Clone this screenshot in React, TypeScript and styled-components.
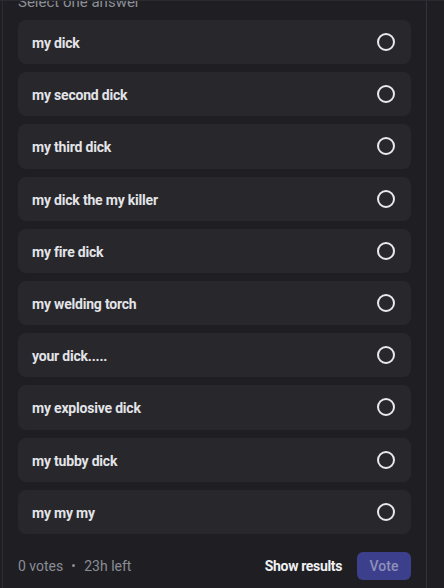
import React from 'react';
import styled, { createGlobalStyle } from 'styled-components';

const GlobalStyle = createGlobalStyle`
  html, body {
    margin: 0;
    padding: 0;
    background: #1f1f23;
  }
  body {
    font-family: Roboto, "Noto Sans", sans-serif;
    -webkit-font-smoothing: antialiased;
  }
`;

const Viewport = styled.div`
  height: 588px;
  overflow: hidden;
  border-top: 1px solid #2a2b30;
  box-sizing: border-box;
  background: #1f1f23;
`;

const Panel = styled.div`
  margin-left: 2px;
  width: 425px;
  box-sizing: border-box;
  border-left: 1px solid #2c2d32;
  border-right: 1px solid #33343a;
  padding: 0 15px 8px;
  margin-top: -8px;
`;

const Hint = styled.div`
  font-size: 15px;
  line-height: 18px;
  color: #8c8f97;
  margin-bottom: 9px;
`;

const OptionList = styled.div`
  display: flex;
  flex-direction: column;
  gap: 8px;
`;

const Option = styled.div`
  height: 44.2px;
  box-sizing: border-box;
  display: flex;
  align-items: center;
  justify-content: space-between;
  padding: 0 16px 0 14px;
  border-radius: 8px;
  background: #27272c;
  cursor: pointer;
`;

const OptionLabel = styled.span`
  padding-top: 2px;
  font-size: 14px;
  font-weight: 700;
  color: #e3e4e8;
  letter-spacing: -0.2px;
`;

const Radio = styled.span`
  width: 18px;
  height: 18px;
  box-sizing: border-box;
  border-radius: 50%;
  border: 2px solid #e8e9ec;
`;

const Footer = styled.div`
  display: flex;
  align-items: center;
  padding-top: 18px;
`;

const Meta = styled.div`
  flex: 1;
  display: flex;
  align-items: center;
  gap: 8px;
  font-size: 14px;
  color: #8a8d96;
`;

const Dot = styled.span`
  width: 3px;
  height: 3px;
  border-radius: 50%;
  background: #8a8d96;
  margin: 0 1px;
`;

const TextButton = styled.button`
  background: none;
  border: none;
  padding: 0;
  margin-right: 15px;
  font-family: inherit;
  font-size: 14px;
  font-weight: 700;
  letter-spacing: -0.35px;
  color: #f0f1f3;
  cursor: pointer;
`;

const VoteButton = styled.button<{ $disabled?: boolean }>`
  width: 54px;
  height: 28px;
  border: none;
  border-radius: 6px;
  font-family: inherit;
  font-size: 14px;
  font-weight: 500;
  background: ${p => (p.$disabled ? '#3c3f8c' : '#5865f2')};
  color: ${p => (p.$disabled ? '#8e90b9' : '#ffffff')};
  cursor: ${p => (p.$disabled ? 'not-allowed' : 'pointer')};
`;

const answers = [
  'my dick',
  'my second dick',
  'my third dick',
  'my dick the my killer',
  'my fire dick',
  'my welding torch',
  'your dick.....',
  'my explosive dick',
  'my tubby dick',
  'my my my',
];

export default function App() {
  return (
    <>
      <GlobalStyle />
      <Viewport>
        <Panel>
          <Hint>Select one answer</Hint>
          <OptionList>
            {answers.map(a => (
              <Option key={a}>
                <OptionLabel>{a}</OptionLabel>
                <Radio />
              </Option>
            ))}
          </OptionList>
          <Footer>
            <Meta>
              <span>0 votes</span>
              <Dot />
              <span>23h left</span>
            </Meta>
            <TextButton>Show results</TextButton>
            <VoteButton $disabled>Vote</VoteButton>
          </Footer>
        </Panel>
      </Viewport>
    </>
  );
}
